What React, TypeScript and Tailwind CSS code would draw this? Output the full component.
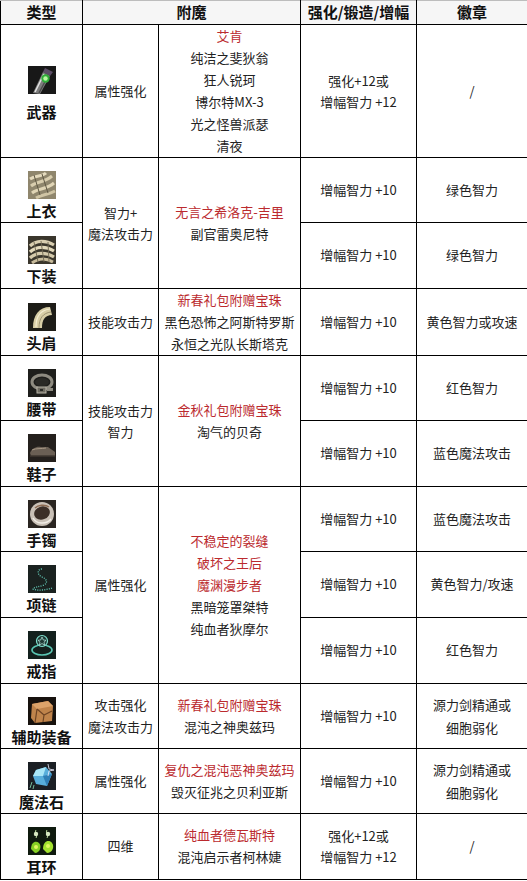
import type { ReactNode } from "react";

const red = "text-[#bb2a2e]";

function Icon({ bg, children }: { bg: string; children: ReactNode }) {
  return (
    <svg width="28" height="28" viewBox="0 0 28 28" className="block">
      <rect width="28" height="28" fill={bg} />
      {children}
    </svg>
  );
}

const icons = {
  weapon: (
    <Icon bg="#181818">
      <path d="M17 2 L25 6 L22 10 L15 6 Z" fill="#5b4d66" />
      <path d="M5 27 L15 6 L22 10 L12 28 Z" fill="#7d7d7d" />
      <path d="M7 26 L16 8" stroke="#e2e2e2" strokeWidth="1.6" />
      <path d="M11 27 L20 10" stroke="#4a4a4a" strokeWidth="1.4" />
      <circle cx="17.5" cy="12.5" r="4.2" fill="#2fae38" />
      <circle cx="17.5" cy="12.5" r="2.2" fill="#b8f7a2" />
    </Icon>
  ),
  top: (
    <Icon bg="#8f866d">
      <path d="M2 8 C8 4 14 6 18 2" stroke="#e4dabd" strokeWidth="3" fill="none" />
      <path d="M3 15 C9 10 16 12 24 5" stroke="#d8cdae" strokeWidth="3" fill="none" />
      <path d="M4 22 C10 17 18 19 26 12" stroke="#e0d5b6" strokeWidth="3" fill="none" />
      <path d="M8 27 C14 23 20 24 27 20" stroke="#cfc4a4" strokeWidth="3" fill="none" />
      <path d="M6 4 L12 24" stroke="#5f5844" strokeWidth="1" />
      <path d="M14 3 L20 22" stroke="#5f5844" strokeWidth="1" />
    </Icon>
  ),
  bottom: (
    <Icon bg="#3a362c">
      <path d="M2 10 C8 4 18 4 26 9" stroke="#d9ceb0" strokeWidth="3.2" fill="none" />
      <path d="M2 16 C8 10 18 10 26 15" stroke="#e3d9bb" strokeWidth="3.2" fill="none" />
      <path d="M2 22 C8 16 18 16 26 21" stroke="#d5caab" strokeWidth="3.2" fill="none" />
      <path d="M4 27 C10 22 18 22 25 26" stroke="#c7bb9b" strokeWidth="3" fill="none" />
      <path d="M6 6 L10 26 M13 5 L16 26 M20 6 L21 26" stroke="#6d6550" strokeWidth="0.9" />
    </Icon>
  ),
  shoulder: (
    <Icon bg="#1d1c17">
      <path d="M5 25 C5 12 11 4 22 4 L24 12 C17 12 14 17 14 25 Z" fill="#d8cea6" />
      <path d="M8 24 C8 13 13 7 22 6" stroke="#f3ecd0" strokeWidth="1.2" fill="none" />
      <path d="M11 25 C11 15 15 10 23 9" stroke="#9e9473" strokeWidth="1" fill="none" />
    </Icon>
  ),
  belt: (
    <Icon bg="#1f1f1c">
      <ellipse cx="14" cy="13" rx="10" ry="7" stroke="#8e8b80" strokeWidth="3" fill="none" />
      <ellipse cx="14" cy="13" rx="7" ry="4" fill="#2a2a26" />
      <rect x="9" y="18" width="9" height="6" fill="#6f6c62" stroke="#b9b5a8" strokeWidth="1" />
      <rect x="12" y="20" width="3" height="2" fill="#2a2a26" />
      <rect x="19" y="19" width="6" height="3" fill="#8e8b80" />
    </Icon>
  ),
  shoes: (
    <Icon bg="#24201d">
      <path d="M2 19 C4 14 9 12 13 13 L20 13 C22 15 25 16 27 18 L27 22 L3 22 Z" fill="#6a5f54" />
      <path d="M4 16 C8 14 14 15 18 14" stroke="#a69684" strokeWidth="1" fill="none" />
      <path d="M2 22 L27 22" stroke="#3f3731" strokeWidth="1.5" />
    </Icon>
  ),
  bracelet: (
    <Icon bg="#2a2521">
      <circle cx="14" cy="14" r="12" fill="#c9c0b6" />
      <ellipse cx="14" cy="13" rx="8" ry="6.5" fill="#3b2e27" transform="rotate(-20 14 13)" />
      <path d="M5 18 C8 24 18 25 23 19" stroke="#f1ece6" strokeWidth="1.5" fill="none" />
      <path d="M7 8 C10 5 17 4 21 7" stroke="#8b6a52" strokeWidth="1.5" fill="none" />
    </Icon>
  ),
  necklace: (
    <Icon bg="#1a2220">
      <path
        d="M14 4 C9 4 9 10 14 12 C19 14 20 18 16 20 C11 22 6 22 5 24 C10 26 18 25 24 23"
        stroke="#63cbb9"
        strokeWidth="1.3"
        strokeDasharray="1 1.3"
        fill="none"
      />
    </Icon>
  ),
  ring: (
    <Icon bg="#13201d">
      <ellipse cx="14" cy="19" rx="10" ry="5" stroke="#5ac6b3" strokeWidth="1.6" fill="none" />
      <circle cx="14" cy="10" r="5.5" stroke="#7fe0cf" strokeWidth="1.2" fill="#1f3a35" />
      <path d="M14 6 L15.3 9 L18 9.3 L16 11.2 L16.6 14 L14 12.6 L11.4 14 L12 11.2 L10 9.3 L12.7 9 Z" stroke="#bff3ea" strokeWidth="0.7" fill="none" />
    </Icon>
  ),
  aux: (
    <Icon bg="#17120e">
      <path d="M4 7 L20 4 L25 9 L24 24 L7 26 L3 21 Z" fill="#c0844b" />
      <path d="M4 7 L20 4 L25 9 L9 12 Z" fill="#dca36a" />
      <path d="M9 12 L7 26 M9 12 L16 18 L24 14 M16 18 L15 25" stroke="#6e4424" strokeWidth="1.2" fill="none" />
    </Icon>
  ),
  stone: (
    <Icon bg="#1b1f24">
      <path d="M8 8 L18 5 L24 12 L19 24 L8 22 L5 14 Z" fill="#58aedb" />
      <path d="M8 8 L18 5 L15 14 L5 14 Z" fill="#a9e6f7" />
      <path d="M15 14 L24 12 L19 24 Z" fill="#2f7fb6" />
      <path d="M20 2 L21 7 L26 8 L21 9 L20 14" stroke="#eef" strokeWidth="0.8" fill="none" />
      <path d="M4 20 L2 26 M6 23 L5 27" stroke="#9fc" strokeWidth="0.7" />
    </Icon>
  ),
  earring: (
    <Icon bg="#0f1a0e">
      <path d="M8 3 C6 6 10 8 8 11" stroke="#b7d69a" strokeWidth="1" fill="none" />
      <path d="M19 3 C17 6 21 8 19 11" stroke="#b7d69a" strokeWidth="1" fill="none" />
      <circle cx="8" cy="7" r="2.2" fill="#d8e9c2" />
      <circle cx="20" cy="7" r="2.2" fill="#d8e9c2" />
      <path d="M3 22 C3 15 8 13 11 16 C14 19 12 26 7 26 Z" fill="#86d024" />
      <path d="M15 22 C15 14 21 12 24 16 C27 20 24 26 19 26 Z" fill="#a3e22e" />
      <circle cx="8" cy="20" r="2" fill="#e2f860" />
      <circle cx="20" cy="19" r="2" fill="#e2f860" />
    </Icon>
  ),
};

const cell = "border border-black text-center align-middle";

function Item({ icon, label, h, first }: { icon: ReactNode; label: string; h: string; first?: boolean }) {
  return (
    <td className={`${cell} ${h}`}>
      <div className={`flex flex-col items-center ${first ? "pt-[6px]" : "pt-[12px]"}`}>
        {icon}
        <span className={`${first ? "mt-[8px]" : "mt-[2px]"} text-[15px] leading-[20px] font-bold text-[#111]`}>
          {label}
        </span>
      </div>
    </td>
  );
}

function Lines({ items }: { items: [string, boolean][] }) {
  return (
    <div className="leading-[22px]">
      {items.map(([t, r], i) => (
        <div key={i} className={r ? red : ""}>
          {t}
        </div>
      ))}
    </div>
  );
}

export default function App() {
  return (
    <div className="w-[527px] h-[881px] bg-white font-['Noto_Sans_CJK_SC','Microsoft_YaHei',sans-serif] text-[13px] text-[#222]">
      <table className="w-[527px] table-fixed border-collapse">
        <colgroup>
          <col className="w-[82px]" />
          <col className="w-[76px]" />
          <col className="w-[142px]" />
          <col className="w-[116px]" />
          <col className="w-[111px]" />
        </colgroup>
        <thead>
          <tr className="bg-[#f6f6f6]">
            <th className={`${cell} h-[23px] border-t-[#bdbdbd] text-[15px] font-bold text-[#111]`}>类型</th>
            <th colSpan={2} className={`${cell} border-t-[#bdbdbd] text-[15px] font-bold text-[#111]`}>
              附魔
            </th>
            <th className={`${cell} border-t-[#bdbdbd] text-[15px] font-bold text-[#111]`}>强化/锻造/增幅</th>
            <th className={`${cell} border-t-[#bdbdbd] text-[15px] font-bold text-[#111]`}>徽章</th>
          </tr>
        </thead>
        <tbody>
          <tr>
            <Item icon={icons.weapon} label="武器" h="h-[130px]" first />
            <td className={cell}>属性强化</td>
            <td className={cell}>
              <Lines
                items={[
                  ["艾肯", true],
                  ["纯洁之斐狄翁", false],
                  ["狂人锐珂", false],
                  ["博尔特MX-3", false],
                  ["光之怪兽派瑟", false],
                  ["清夜", false],
                ]}
              />
            </td>
            <td className={`${cell} leading-[21px]`}>
              强化+12或
              <br />
              增幅智力 +12
            </td>
            <td className={cell}>/</td>
          </tr>

          <tr>
            <Item icon={icons.top} label="上衣" h="h-[65px]" />
            <td rowSpan={2} className={`${cell} leading-[21px]`}>
              智力+
              <br />
              魔法攻击力
            </td>
            <td rowSpan={2} className={cell}>
              <Lines
                items={[
                  ["无言之希洛克-吉里", true],
                  ["副官雷奥尼特", false],
                ]}
              />
            </td>
            <td className={cell}>增幅智力 +10</td>
            <td className={cell}>绿色智力</td>
          </tr>
          <tr>
            <Item icon={icons.bottom} label="下装" h="h-[66px]" />
            <td className={cell}>增幅智力 +10</td>
            <td className={cell}>绿色智力</td>
          </tr>

          <tr>
            <Item icon={icons.shoulder} label="头肩" h="h-[66px]" />
            <td className={cell}>技能攻击力</td>
            <td className={cell}>
              <Lines
                items={[
                  ["新春礼包附赠宝珠", true],
                  ["黑色恐怖之阿斯特罗斯", false],
                  ["永恒之光队长斯塔克", false],
                ]}
              />
            </td>
            <td className={cell}>增幅智力 +10</td>
            <td className={cell}>黄色智力或攻速</td>
          </tr>

          <tr>
            <Item icon={icons.belt} label="腰带" h="h-[65px]" />
            <td rowSpan={2} className={`${cell} leading-[21px]`}>
              技能攻击力
              <br />
              智力
            </td>
            <td rowSpan={2} className={cell}>
              <Lines
                items={[
                  ["金秋礼包附赠宝珠", true],
                  ["淘气的贝奇", false],
                ]}
              />
            </td>
            <td className={cell}>增幅智力 +10</td>
            <td className={cell}>红色智力</td>
          </tr>
          <tr>
            <Item icon={icons.shoes} label="鞋子" h="h-[66px]" />
            <td className={cell}>增幅智力 +10</td>
            <td className={cell}>蓝色魔法攻击</td>
          </tr>

          <tr>
            <Item icon={icons.bracelet} label="手镯" h="h-[65px]" />
            <td rowSpan={3} className={cell}>属性强化</td>
            <td rowSpan={3} className={cell}>
              <Lines
                items={[
                  ["不稳定的裂缝", true],
                  ["破坏之王后", true],
                  ["魔渊漫步者", true],
                  ["黑暗笼罩桀特", false],
                  ["纯血者狄摩尔", false],
                ]}
              />
            </td>
            <td className={cell}>增幅智力 +10</td>
            <td className={cell}>蓝色魔法攻击</td>
          </tr>
          <tr>
            <Item icon={icons.necklace} label="项链" h="h-[66px]" />
            <td className={cell}>增幅智力 +10</td>
            <td className={cell}>黄色智力/攻速</td>
          </tr>
          <tr>
            <Item icon={icons.ring} label="戒指" h="h-[66px]" />
            <td className={cell}>增幅智力 +10</td>
            <td className={cell}>红色智力</td>
          </tr>

          <tr>
            <Item icon={icons.aux} label="辅助装备" h="h-[65px]" />
            <td className={`${cell} leading-[22px]`}>
              攻击强化
              <br />
              魔法攻击力
            </td>
            <td className={cell}>
              <Lines
                items={[
                  ["新春礼包附赠宝珠", true],
                  ["混沌之神奥兹玛", false],
                ]}
              />
            </td>
            <td className={cell}>增幅智力 +10</td>
            <td className={`${cell} leading-[23px]`}>
              源力剑精通或
              <br />
              细胞弱化
            </td>
          </tr>

          <tr>
            <Item icon={icons.stone} label="魔法石" h="h-[65px]" />
            <td className={cell}>属性强化</td>
            <td className={cell}>
              <Lines
                items={[
                  ["复仇之混沌恶神奥兹玛", true],
                  ["毁灭征兆之贝利亚斯", false],
                ]}
              />
            </td>
            <td className={cell}>增幅智力 +10</td>
            <td className={`${cell} leading-[23px]`}>
              源力剑精通或
              <br />
              细胞弱化
            </td>
          </tr>

          <tr>
            <Item icon={icons.earring} label="耳环" h="h-[66px]" />
            <td className={cell}>四维</td>
            <td className={cell}>
              <Lines
                items={[
                  ["纯血者德瓦斯特", true],
                  ["混沌启示者柯林婕", false],
                ]}
              />
            </td>
            <td className={`${cell} leading-[21px]`}>
              强化+12或
              <br />
              增幅智力 +12
            </td>
            <td className={cell}>/</td>
          </tr>
        </tbody>
      </table>
    </div>
  );
}
